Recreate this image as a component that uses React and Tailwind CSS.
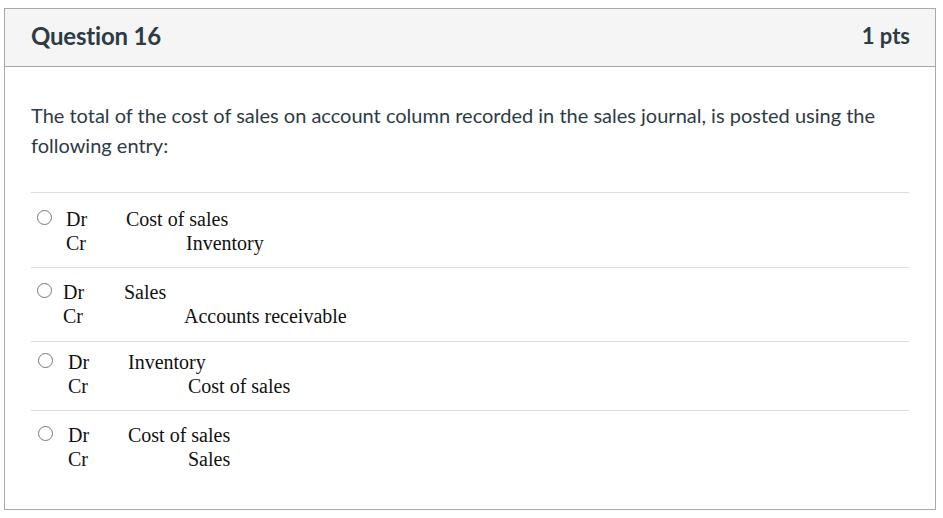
export default function App() {
  const options = [
    { dr: "Cost of sales", cr: "Inventory", pad: "pt-[14px]", radioX: "ml-[6px]", labelX: "ml-[14px]", mid: "w-[60px]" },
    { dr: "Sales", cr: "Accounts receivable", pad: "pt-[12px]", radioX: "ml-[6px]", labelX: "ml-[11px]", mid: "w-[61px]" },
    { dr: "Inventory", cr: "Cost of sales", pad: "pt-[8px]", radioX: "ml-[7px]", labelX: "ml-[15px]", mid: "w-[60px]" },
    { dr: "Cost of sales", cr: "Sales", pad: "pt-[12px]", radioX: "ml-[7px]", labelX: "ml-[15px]", mid: "w-[60px]" },
  ];
  const heights = ["h-[75px]", "h-[74px]", "h-[69px]", "h-[98px]"];

  return (
    <div className="bg-white w-[943px] h-[518px] pt-[8px] pl-[4px]" style={{ fontFamily: "Lato, 'Noto Sans', sans-serif" }}>
      <div className="w-[932px] h-[502px] border border-[#a9a9a9] text-[#2d3b45]">
        {/* Header */}
        <div className="h-[58px] bg-[#f5f5f5] border-b border-[#a9a9a9] flex items-center justify-between pl-[26px] pr-[25px] pb-[4px]">
          <h2 className="text-[24px] font-bold tracking-[-0.2px]">Question 16</h2>
          <span className="text-[22px] font-bold">1 pts</span>
        </div>

        {/* Body */}
        <div className="px-[26px] pt-[33px]">
          <p className="text-[20px] leading-[30px] pr-[20px]">
            The total of the cost of sales on account column recorded in the sales journal, is posted using the following entry:
          </p>

          <div className="mt-[32px]">
            {options.map((o, i) => (
              <div key={i} className={`border-t border-[#dddddd] ${heights[i]} ${o.pad}`}>
                <div className="flex items-start" style={{ fontFamily: "'Liberation Serif', 'Times New Roman', serif" }}>
                  <span className={`mt-[3px] w-[15px] h-[15px] rounded-full border border-[#777] bg-white shrink-0 ${o.radioX}`}></span>
                  <div className={`${o.labelX} text-[20px] leading-[24px] text-[#111]`}>
                    <div className="flex">
                      <span className={`${o.mid}`}>Dr</span>
                      <span>{o.dr}</span>
                    </div>
                    <div className="flex">
                      <span className={`${o.mid}`}>Cr</span>
                      <span className="ml-[60px]">{o.cr}</span>
                    </div>
                  </div>
                </div>
              </div>
            ))}
          </div>
        </div>
      </div>
    </div>
  );
}
